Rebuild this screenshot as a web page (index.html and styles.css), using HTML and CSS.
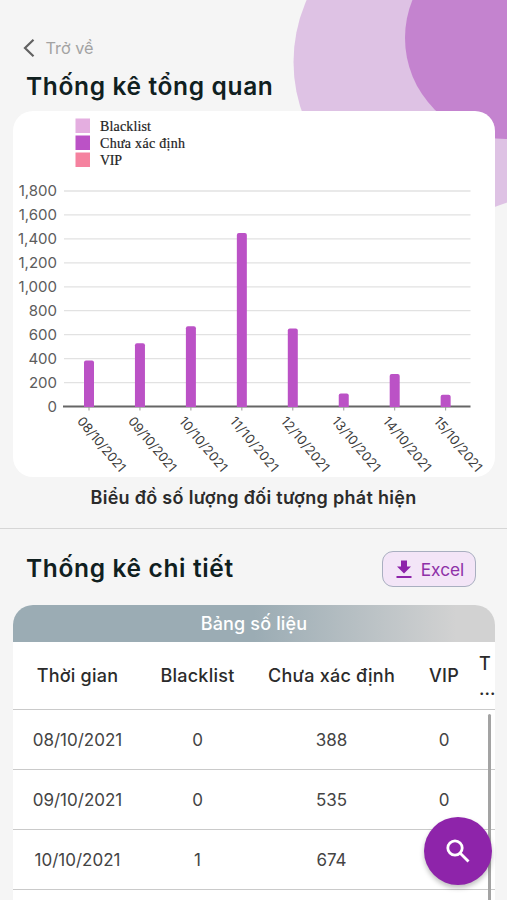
FILE: index.html
```html
<!DOCTYPE html>
<html lang="vi">
<head>
    <meta charset="UTF-8">
    <meta name="viewport" content="width=device-width, initial-scale=1.0">
    <title>Thống kê</title>
    <link rel="stylesheet" href="styles.css">
</head>
<body>
    <div class="backdrop">
        <svg width="507" height="220" viewBox="0 0 507 220">
            <circle cx="446.5" cy="62" r="153" fill="#dec2e4"/>
            <circle cx="506" cy="38" r="101" fill="#c483cf"/>
        </svg>
    </div>

    <main class="page">
        <a class="back">
            <svg class="back-icon" width="12" height="18" viewBox="0 0 12 18"><path d="M10.500 .8 2 9l8.500 8.200" fill="none" stroke="#626262" stroke-width="2.2"/></svg>
            <span class="back-text">Trở về</span>
        </a>
        <h1 class="title">Thống kê tổng quan</h1>

        <section class="chart-card">
            <svg id="chart" width="482" height="366" viewBox="13 111 482 366">
                <g class="legend">
                    <rect x="75.5" y="118.5" width="14.5" height="14.5" fill="#e4aee0"/>
                    <rect x="75.5" y="135.5" width="14.5" height="14.5" fill="#bb52c6"/>
                    <rect x="75.5" y="152.5" width="14.5" height="14.5" fill="#f5829f"/>
                    <text x="100" y="130.5" textLength="51">Blacklist</text>
                    <text x="100" y="147.5" textLength="85">Chưa xác định</text>
                    <text x="100" y="164.5" textLength="22">VIP</text>
                </g>
            </svg>
        </section>
        <p class="caption">Biểu đồ số lượng đối tượng phát hiện</p>

        <section class="detail">
            <div class="detail-head">
                <h2 class="title">Thống kê chi tiết</h2>
                <button class="excel">
                    <svg width="16" height="19" viewBox="0 0 16 19" fill="#8e24aa"><path d="M5 .5h6v6h4l-7 7-7-7h4zM.5 16h15v2H.5z"/></svg>
                    <span>Excel</span>
                </button>
            </div>
            <div class="table">
                <div class="table-title">Bảng số liệu</div>
                <div class="row row-head">
                    <span>Thời gian</span><span>Blacklist</span><span>Chưa xác định</span><span>VIP</span><span class="total">T<br>...</span>
                </div>
                <div class="rows">
                    <div class="row"><span>08/10/2021</span><span>0</span><span>388</span><span>0</span></div>
                    <div class="row"><span>09/10/2021</span><span>0</span><span>535</span><span>0</span></div>
                    <div class="row"><span>10/10/2021</span><span>1</span><span>674</span><span>0</span></div>
                    <div class="row"></div>
                    <div class="scrollbar"></div>
                </div>
            </div>
        </section>
    </main>

    <button class="search">
        <svg width="24" height="24" viewBox="0 0 24 24" fill="none" stroke="#fff" stroke-width="2.8"><circle cx="9" cy="9" r="7.200"/><path d="m14 14 8.500 8.500"/></svg>
    </button>

    <script>
        const data = [
            ['08/10/2021', 388], ['09/10/2021', 532], ['10/10/2021', 674], ['11/10/2021', 1453],
            ['12/10/2021', 655], ['13/10/2021', 112], ['14/10/2021', 276], ['15/10/2021', 102]
        ];
        const chart = document.getElementById('chart');
        const bottom = 406.5;
        const scale = 215.5 / 1800;
        const step = 50.95;

        function add(name, attrs, text) {
            const el = document.createElementNS('http://www.w3.org/2000/svg', name);
            for (const key in attrs) el.setAttribute(key, attrs[key]);
            if (text) el.textContent = text;
            chart.appendChild(el);
        }

        // Grid lines and y axis labels
        for (let v = 0; v <= 1800; v += 200) {
            const y = bottom - v * scale;
            if (v > 0) add('line', { x1: 64, x2: 470.5, y1: y, y2: y, class: 'grid' });
            add('text', { x: 57, y: y + 5.3, class: 'y-label' }, v.toLocaleString('en-US'));
        }
        add('line', { x1: 63, x2: 470.5, y1: bottom, y2: bottom, class: 'axis' });

        // Bars, ticks and x axis labels
        data.forEach(([day, value], i) => {
            const x = 89 + i * step;
            const h = value * scale;
            add('line', { x1: x, x2: x, y1: bottom, y2: bottom + 4, class: 'tick' });
            add('path', {
                d: `M${x - 5} ${bottom + 0.5}v${2 - h}q0-2 2-2h6q2 0 2 2v${h - 2}z`,
                class: 'bar'
            });
            add('text', {
                x: 0, y: 0, class: 'x-label', textLength: 67,
                transform: `translate(${x - 12.5} 421.5) rotate(50)`
            }, day);
        });
    </script>
</body>
</html>
```
FILE: styles.css
```css
* {
    box-sizing: border-box;
}
body {
    position: relative;
    margin: 0;
    height: 900px;
    overflow: hidden;
    background: #f5f5f5;
    color: #2b2b2b;
    font-family: Inter, Roboto, sans-serif;
}
h1, h2, p {
    margin: 0;
}
button {
    font-family: inherit;
    padding: 0;
}
.backdrop {
    position: absolute;
    inset: 0;
    overflow: hidden;
}
.page {
    position: relative;
    padding-top: 35px;
}
.back {
    display: flex;
    align-items: center;
    gap: 11px;
    height: 26px;
    padding-left: 22.5px;
    color: #a3a3a3;
    font-size: 16.3px;
}
.title {
    height: 50px;
    padding-left: 26px;
    line-height: 51px;
    font-size: 24.5px;
    font-weight: 600;
    letter-spacing: 0.65px;
    color: #10201f;
    white-space: nowrap;
}
.chart-card {
    width: 482px;
    height: 366px;
    margin-left: 13px;
    border-radius: 20px;
    background: #fff;
    overflow: hidden;
}
#chart {
    display: block;
}
.legend text {
    font: 14px "Liberation Serif", serif;
    fill: #222;
    stroke: #222;
    stroke-width: 0.2px;
}
.grid {
    stroke: #e2e2e2;
    stroke-width: 1.3px;
}
.axis {
    stroke: #666;
    stroke-width: 2px;
}
.tick {
    stroke: #999;
}
.bar {
    fill: #bb52c6;
}
.y-label {
    font-size: 15px;
    text-anchor: end;
    fill: #5c5c5c;
}
.x-label {
    font-size: 13px;
    fill: #3c3c3c;
}
.caption {
    height: 51px;
    line-height: 42px;
    text-align: center;
    font-size: 18px;
    font-weight: 600;
    letter-spacing: 0.3px;
    white-space: nowrap;
}
.detail {
    border-top: 1px solid #d6d6d6;
}
.detail-head {
    display: flex;
    justify-content: space-between;
    height: 76px;
    padding: 14px 31px 0 0;
}
.excel {
    display: flex;
    align-items: center;
    justify-content: center;
    gap: 9px;
    width: 94px;
    height: 36px;
    margin-top: 8px;
    padding-left: 2px;
    border: 1.5px solid #a9afc0;
    border-radius: 11px;
    background: #f3e5f7;
    color: #8e30a8;
    font-size: 17.3px;
}
.table {
    width: 482px;
    height: 310px;
    margin-left: 13px;
    border-radius: 20px 20px 0 0;
    background: #fff;
    overflow: hidden;
}
.table-title {
    height: 36.5px;
    line-height: 37px;
    text-align: center;
    color: #fff;
    font-size: 18px;
    font-weight: 500;
    letter-spacing: 0.15px;
    background: linear-gradient(90deg, #9bacb4 50%, #d2d2d2 92%);
}
.row {
    display: grid;
    grid-template-columns: 129px 111px 157px 68px 17px;
    align-items: center;
    height: 60px;
    border-bottom: 1.5px solid #cacaca;
    text-align: center;
    font-size: 17px;
    color: #444;
    white-space: nowrap;
}
.row-head {
    height: 68.5px;
    font-size: 18px;
    font-weight: 500;
    letter-spacing: 0.25px;
    color: #2b2b2b;
}
.total {
    padding-top: 2px;
    line-height: 25px;
    text-align: left;
    padding-left: 1px;
    letter-spacing: 0;
}
.rows {
    position: relative;
}
.scrollbar {
    position: absolute;
    right: 4px;
    top: 4px;
    width: 3px;
    height: 240px;
    border-radius: 2px;
    background: #a3a3a3;
}
.search {
    position: absolute;
    left: 424px;
    top: 817px;
    display: flex;
    align-items: center;
    justify-content: center;
    width: 68px;
    height: 68px;
    border: 0;
    border-radius: 50%;
    background: #8e24aa;
    box-shadow: 0 3px 5px rgba(0, 0, 0, 0.25);
}
```
